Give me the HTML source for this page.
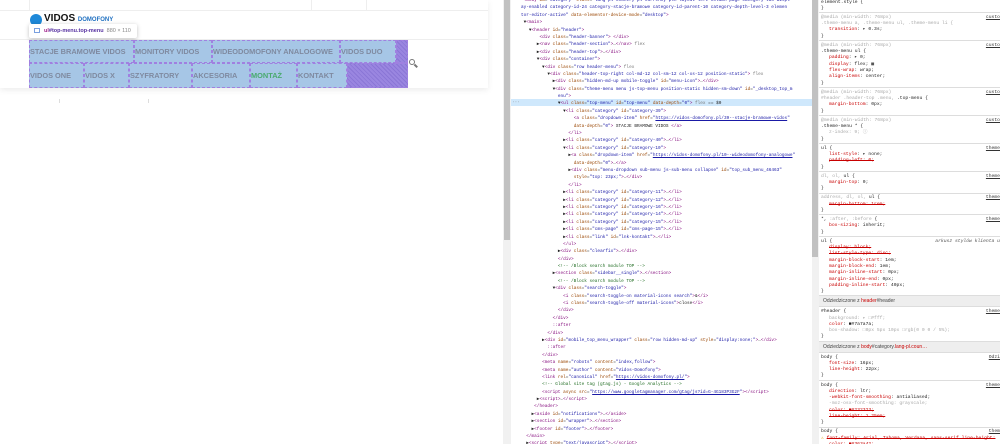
<!DOCTYPE html>
<html><head><meta charset="utf-8"><style>
*{margin:0;padding:0;box-sizing:border-box}
body{width:1000px;height:444px;overflow:hidden;background:#fff;position:relative;font-family:"Liberation Sans",sans-serif}
.abs{position:absolute}
.page{left:0;top:0;width:488px;height:88px;background:#fff;box-shadow:0 2px 6px rgba(0,0,0,.08)}
.cell{position:absolute;background:#a6c6e6;border:1px dashed #a080e0;color:#7f8aa0;font-size:7.4px;font-weight:bold;line-height:21px;padding-left:0;white-space:nowrap;overflow:hidden}
.hatch{position:absolute;background:repeating-linear-gradient(45deg,#9a86e0 0 2px,#8a76d6 2px 3px);border:1px dashed #a080e0}
.domclip{position:absolute;left:511px;top:0;width:301px;height:444px;overflow:hidden}
.dom{position:absolute;left:-19px;top:-3px;width:340px;font-family:"Liberation Mono",monospace;font-size:4.4px;line-height:7.4px;color:#222}
.dom div{height:7.4px;white-space:pre}
.t{color:#881280}.a{color:#994500}.v{color:#1a1aa6}.c{color:#236e25}.u{color:#1a1aa6;text-decoration:underline}.g{color:#777}
.sty{position:absolute;left:819px;top:-3px;width:181px;height:447px;font-family:"Liberation Mono",monospace;font-size:4.7px;line-height:6.3px;overflow:hidden;color:#222}
.b{padding:1.8px 0 0 2px;border-bottom:1px solid #ddd;position:relative;white-space:pre}
.p{padding-left:8px}.r{color:#c80000}.s{text-decoration:line-through;color:#c80000}.x{color:#aaa}
.src{position:absolute;right:0;top:1.8px;text-decoration:underline;color:#333}
.hd{background:#eee;font-family:"Liberation Sans",sans-serif;font-size:5px;line-height:10px;padding-left:4px;border-bottom:1px solid #ddd;color:#444;white-space:nowrap}
</style></head><body>
<div class="abs page">
 <div class="abs" style="left:0;top:10px;width:488px;height:1px;background:#eee"></div>
 <div class="abs" style="left:29px;top:0;width:1px;height:10px;background:#eee"></div>
 <div class="abs" style="left:311px;top:0;width:1px;height:10px;background:#eee"></div>
 <div class="abs" style="left:366px;top:0;width:1px;height:10px;background:#eee"></div>
 <div class="abs" style="left:0;top:39px;width:488px;height:1px;background:#eee"></div>
 <div class="abs" style="left:30px;top:14px;width:12px;height:12px;border-radius:50%;background:#1e88d8"></div>
 <div class="abs" style="left:44px;top:14px;font-size:10px;font-weight:bold;color:#111;line-height:10px">VIDOS <span style="font-size:6px;color:#1e6fc0">DOMOFONY</span></div>
 <div class="abs" style="left:29px;top:24px;width:108px;height:14px;background:#fff;box-shadow:0 1px 4px rgba(0,0,0,.25);border-radius:2px;font-size:5.5px;line-height:14px;padding-left:15px;white-space:nowrap"><span style="position:absolute;left:5px;top:4px;width:6px;height:5px;border:1px solid #7aa0e0"></span><b style="color:#a0208a">ul</b><b style="color:#5530a0">#top-menu.top-menu</b> <span style="color:#888">&nbsp;880 × 110</span></div>
 <div class="cell" style="left:29px;top:40px;width:105px;height:23px">STACJE BRAMOWE VIDOS</div>
 <div class="cell" style="left:134px;top:40px;width:78px;height:23px">MONITORY VIDOS</div>
 <div class="cell" style="left:212px;top:40px;width:128px;height:23px">WIDEODOMOFONY ANALOGOWE</div>
 <div class="cell" style="left:340px;top:40px;width:56px;height:23px">VIDOS DUO</div>
 <div class="hatch" style="left:396px;top:40px;width:12px;height:23px"></div>
 <div class="cell" style="left:29px;top:63px;width:55px;height:25px;line-height:23px">VIDOS ONE</div>
 <div class="cell" style="left:84px;top:63px;width:45px;height:25px;line-height:23px">VIDOS X</div>
 <div class="cell" style="left:129px;top:63px;width:63px;height:25px;line-height:23px">SZYFRATORY</div>
 <div class="cell" style="left:192px;top:63px;width:58px;height:25px;line-height:23px">AKCESORIA</div>
 <div class="cell" style="left:250px;top:63px;width:47px;height:25px;line-height:23px;color:#4aaa70">MONTAŻ</div>
 <div class="cell" style="left:297px;top:63px;width:50px;height:25px;line-height:23px">KONTAKT</div>
 <div class="hatch" style="left:347px;top:63px;width:61px;height:25px"></div>
 <div class="abs" style="left:409px;top:59px;width:6px;height:6px;border:1.3px solid #777;border-radius:50%"></div>
 <div class="abs" style="left:414px;top:65px;width:4px;height:1.5px;background:#777;transform:rotate(45deg)"></div>
</div>
<div class="abs" style="left:59px;top:99px;width:1px;height:4px;background:#ddd"></div>
<div class="abs" style="left:148px;top:99px;width:1px;height:4px;background:#ddd"></div>
<div class="abs" style="left:503px;top:0;width:8px;height:444px;background:#f1f1f1"></div>
<div class="abs" style="left:504px;top:0;width:6px;height:240px;background:#c1c1c1"></div>
<div class="abs" style="left:812px;top:0;width:7px;height:444px;background:#f1f1f1"></div>
<div class="abs" style="left:812px;top:0;width:6px;height:257px;background:#c1c1c1"></div>
<div class="abs" style="left:511px;top:99px;width:301px;height:7px;background:#cfe8fc"></div>
<div class="abs" style="left:512px;top:99px;font-family:'Liberation Mono',monospace;font-size:4.4px;line-height:7px;color:#777">···</div>
<div class="domclip"><div class="dom"><div>            <span class="t">&lt;body</span> <span class="a">id</span>=<span class="v">"category"</span> <span class="a">class</span>=<span class="v">"lang-pl country-pl currency-pln layout-left-column page-category tax-displ</span></div><div><span class="v">           ay-enabled category-id-24 category-stacje-bramowe category-id-parent-10 category-depth-level-3 elemen</span></div><div><span class="v">           tor-editor-active"</span> <span class="a">data-elementor-device-mode</span>=<span class="v">"desktop"</span><span class="t">&gt;</span></div><div>            ▼<span class="t">&lt;main&gt;</span></div><div>              ▼<span class="t">&lt;header</span> <span class="a">id</span>=<span class="v">"header"</span><span class="t">&gt;</span></div><div>                  <span class="t">&lt;div</span> <span class="a">class</span>=<span class="v">"header-banner"</span><span class="t">&gt; &lt;/div&gt;</span></div><div>                 ▶<span class="t">&lt;nav</span> <span class="a">class</span>=<span class="v">"header-section"</span><span class="t">&gt;</span>…<span class="t">&lt;/nav&gt;</span> <span class="g">flex</span></div><div>                 ▶<span class="t">&lt;div</span> <span class="a">class</span>=<span class="v">"header-top"</span><span class="t">&gt;</span>…<span class="t">&lt;/div&gt;</span></div><div>                 ▼<span class="t">&lt;div</span> <span class="a">class</span>=<span class="v">"container"</span><span class="t">&gt;</span></div><div>                   ▼<span class="t">&lt;div</span> <span class="a">class</span>=<span class="v">"row header-menu"</span><span class="t">&gt;</span> <span class="g">flex</span></div><div>                     ▼<span class="t">&lt;div</span> <span class="a">class</span>=<span class="v">"header-top-right col-md-12 col-sm-12 col-xs-12 position-static"</span><span class="t">&gt;</span> <span class="g">flex</span></div><div>                       ▶<span class="t">&lt;div</span> <span class="a">class</span>=<span class="v">"hidden-md-up mobile-toggle"</span> <span class="a">id</span>=<span class="v">"menu-icon"</span><span class="t">&gt;</span>…<span class="t">&lt;/div&gt;</span></div><div>                       ▼<span class="t">&lt;div</span> <span class="a">class</span>=<span class="v">"theme-menu menu js-top-menu position-static hidden-sm-down"</span> <span class="a">id</span>=<span class="v">"_desktop_top_m</span></div><div><span class="v">                         enu"</span><span class="t">&gt;</span></div><div>                         ▼<span class="t">&lt;ul</span> <span class="a">class</span>=<span class="v">"top-menu"</span> <span class="a">id</span>=<span class="v">"top-menu"</span> <span class="a">data-depth</span>=<span class="v">"0"</span><span class="t">&gt;</span> <span class="g">flex</span> == $0</div><div>                           ▼<span class="t">&lt;li</span> <span class="a">class</span>=<span class="v">"category"</span> <span class="a">id</span>=<span class="v">"category-39"</span><span class="t">&gt;</span></div><div>                               <span class="t">&lt;a</span> <span class="a">class</span>=<span class="v">"dropdown-item"</span> <span class="a">href</span>=<span class="v">"</span><span class="u">https://vidos-domofony.pl/39--stacje-bramowe-vidos</span><span class="v">"</span></div><div>                               <span class="a">data-depth</span>=<span class="v">"0"</span><span class="t">&gt;</span> STACJE BRAMOWE VIDOS <span class="t">&lt;/a&gt;</span></div><div>                             <span class="t">&lt;/li&gt;</span></div><div>                           ▶<span class="t">&lt;li</span> <span class="a">class</span>=<span class="v">"category"</span> <span class="a">id</span>=<span class="v">"category-40"</span><span class="t">&gt;</span>…<span class="t">&lt;/li&gt;</span></div><div>                           ▼<span class="t">&lt;li</span> <span class="a">class</span>=<span class="v">"category"</span> <span class="a">id</span>=<span class="v">"category-10"</span><span class="t">&gt;</span></div><div>                             ▶<span class="t">&lt;a</span> <span class="a">class</span>=<span class="v">"dropdown-item"</span> <span class="a">href</span>=<span class="v">"</span><span class="u">https://vidos-domofony.pl/10--wideodomofony-analogowe</span><span class="v">"</span></div><div>                               <span class="a">data-depth</span>=<span class="v">"0"</span><span class="t">&gt;</span>…<span class="t">&lt;/a&gt;</span></div><div>                             ▶<span class="t">&lt;div</span> <span class="a">class</span>=<span class="v">"menu-dropdown sub-menu js-sub-menu collapse"</span> <span class="a">id</span>=<span class="v">"top_sub_menu_46463"</span></div><div>                               <span class="a">style</span>=<span class="v">"top: 23px;"</span><span class="t">&gt;</span>…<span class="t">&lt;/div&gt;</span></div><div>                             <span class="t">&lt;/li&gt;</span></div><div>                           ▶<span class="t">&lt;li</span> <span class="a">class</span>=<span class="v">"category"</span> <span class="a">id</span>=<span class="v">"category-11"</span><span class="t">&gt;</span>…<span class="t">&lt;/li&gt;</span></div><div>                           ▶<span class="t">&lt;li</span> <span class="a">class</span>=<span class="v">"category"</span> <span class="a">id</span>=<span class="v">"category-12"</span><span class="t">&gt;</span>…<span class="t">&lt;/li&gt;</span></div><div>                           ▶<span class="t">&lt;li</span> <span class="a">class</span>=<span class="v">"category"</span> <span class="a">id</span>=<span class="v">"category-16"</span><span class="t">&gt;</span>…<span class="t">&lt;/li&gt;</span></div><div>                           ▶<span class="t">&lt;li</span> <span class="a">class</span>=<span class="v">"category"</span> <span class="a">id</span>=<span class="v">"category-14"</span><span class="t">&gt;</span>…<span class="t">&lt;/li&gt;</span></div><div>                           ▶<span class="t">&lt;li</span> <span class="a">class</span>=<span class="v">"category"</span> <span class="a">id</span>=<span class="v">"category-15"</span><span class="t">&gt;</span>…<span class="t">&lt;/li&gt;</span></div><div>                           ▶<span class="t">&lt;li</span> <span class="a">class</span>=<span class="v">"cms-page"</span> <span class="a">id</span>=<span class="v">"cms-page-15"</span><span class="t">&gt;</span>…<span class="t">&lt;/li&gt;</span></div><div>                           ▶<span class="t">&lt;li</span> <span class="a">class</span>=<span class="v">"link"</span> <span class="a">id</span>=<span class="v">"lnk-kontakt"</span><span class="t">&gt;</span>…<span class="t">&lt;/li&gt;</span></div><div>                           <span class="t">&lt;/ul&gt;</span></div><div>                         ▶<span class="t">&lt;div</span> <span class="a">class</span>=<span class="v">"clearfix"</span><span class="t">&gt;</span>…<span class="t">&lt;/div&gt;</span></div><div>                         <span class="t">&lt;/div&gt;</span></div><div>                         <span class="c">&lt;!-- /Block search module TOP --&gt;</span></div><div>                       ▶<span class="t">&lt;section</span> <span class="a">class</span>=<span class="v">"sidebar__single"</span><span class="t">&gt;</span>…<span class="t">&lt;/section&gt;</span></div><div>                         <span class="c">&lt;!-- /Block search module TOP --&gt;</span></div><div>                       ▼<span class="t">&lt;div</span> <span class="a">class</span>=<span class="v">"search-toggle"</span><span class="t">&gt;</span></div><div>                           <span class="t">&lt;i</span> <span class="a">class</span>=<span class="v">"search-toggle-on material-icons search"</span><span class="t">&gt;</span>&amp;<span class="t">&lt;/i&gt;</span></div><div>                           <span class="t">&lt;i</span> <span class="a">class</span>=<span class="v">"search-toggle-off material-icons"</span><span class="t">&gt;</span>close<span class="t">&lt;/i&gt;</span></div><div>                         <span class="t">&lt;/div&gt;</span></div><div>                       <span class="t">&lt;/div&gt;</span></div><div>                       <span class="t">::after</span></div><div>                     <span class="t">&lt;/div&gt;</span></div><div>                   ▶<span class="t">&lt;div</span> <span class="a">id</span>=<span class="v">"mobile_top_menu_wrapper"</span> <span class="a">class</span>=<span class="v">"row hidden-md-up"</span> <span class="a">style</span>=<span class="v">"display:none;"</span><span class="t">&gt;</span>…<span class="t">&lt;/div&gt;</span></div><div>                     <span class="t">::after</span></div><div>                   <span class="t">&lt;/div&gt;</span></div><div>                   <span class="t">&lt;meta</span> <span class="a">name</span>=<span class="v">"robots"</span> <span class="a">content</span>=<span class="v">"index,follow"</span><span class="t">&gt;</span></div><div>                   <span class="t">&lt;meta</span> <span class="a">name</span>=<span class="v">"author"</span> <span class="a">content</span>=<span class="v">"Vidos-Domofony"</span><span class="t">&gt;</span></div><div>                   <span class="t">&lt;link</span> <span class="a">rel</span>=<span class="v">"canonical"</span> <span class="a">href</span>=<span class="v">"</span><span class="u">https://vidos-domofony.pl/</span><span class="v">"</span><span class="t">&gt;</span></div><div>                   <span class="c">&lt;!-- Global site tag (gtag.js) - Google Analytics --&gt;</span></div><div>                   <span class="t">&lt;script</span> <span class="a">async src</span>=<span class="v">"</span><span class="u">https://www.googletagmanager.com/gtag/js?id=G-4G183P3G2F</span><span class="v">"</span><span class="t">&gt;&lt;/script&gt;</span></div><div>                 ▶<span class="t">&lt;script&gt;</span>…<span class="t">&lt;/script&gt;</span></div><div>                <span class="t">&lt;/header&gt;</span></div><div>               ▶<span class="t">&lt;aside</span> <span class="a">id</span>=<span class="v">"notifications"</span><span class="t">&gt;</span>…<span class="t">&lt;/aside&gt;</span></div><div>               ▶<span class="t">&lt;section</span> <span class="a">id</span>=<span class="v">"wrapper"</span><span class="t">&gt;</span>…<span class="t">&lt;/section&gt;</span></div><div>               ▶<span class="t">&lt;footer</span> <span class="a">id</span>=<span class="v">"footer"</span><span class="t">&gt;</span>…<span class="t">&lt;/footer&gt;</span></div><div>             <span class="t">&lt;/main&gt;</span></div><div>             ▶<span class="t">&lt;script</span> <span class="a">type</span>=<span class="v">"text/javascript"</span><span class="t">&gt;</span>…<span class="t">&lt;/script&gt;</span></div></div></div>
<div class="sty"><div class="b" style="padding-top:2.5px">element.style {
}</div><div class="b"><span class="x">@media (min-width: 768px)</span>
<span class="x">.theme-menu a, .theme-menu ul, .theme-menu li {</span>
<span class="p"><span class="r">transition</span>: ▸ 0.3s;</span>
}<span class="src">custo</span></div><div class="b"><span class="x">@media (min-width: 768px)</span>
.theme-menu ul {
<span class="p"><span class="r">padding</span>: ▸ 0;</span>
<span class="p"><span class="r">display</span>: flex; ▦</span>
<span class="p"><span class="r">flex-wrap</span>: wrap;</span>
<span class="p"><span class="r">align-items</span>: center;</span>
}<span class="src">custo</span></div><div class="b"><span class="x">@media (min-width: 768px)</span>
<span class="x">#header .header-top .menu, </span>.top-menu {
<span class="p"><span class="r">margin-bottom</span>: 0px;</span>
}<span class="src">custo</span></div><div class="b"><span class="x">@media (min-width: 768px)</span>
.theme-menu * {
<span class="p"><span class="x">z-index: 9; ⓘ</span></span>
}<span class="src">custo</span></div><div class="b">ul {
<span class="p"><span class="r">list-style</span>: ▸ none;</span>
<span class="p"><span class="s">padding-left: 0;</span></span>
}<span class="src">theme</span></div><div class="b"><span class="x">dl, ol, </span>ul {
<span class="p"><span class="r">margin-top</span>: 0;</span>
}<span class="src">theme</span></div><div class="b"><span class="x">address, dl, ol, </span>ul {
<span class="p"><span class="s">margin-bottom: 1rem;</span></span>
}<span class="src">theme</span></div><div class="b">*, <span class="x">:after, :before</span> {
<span class="p"><span class="r">box-sizing</span>: inherit;</span>
}<span class="src">theme</span></div><div class="b">ul {<span class="src" style="text-decoration:none;font-style:italic;color:#555">arkusz stylów klienta u</span>
<span class="p"><span class="s">display: block;</span></span>
<span class="p"><span class="s">list-style-type: disc;</span></span>
<span class="p"><span class="r">margin-block-start</span>: 1em;</span>
<span class="p"><span class="r">margin-block-end</span>: 1em;</span>
<span class="p"><span class="r">margin-inline-start</span>: 0px;</span>
<span class="p"><span class="r">margin-inline-end</span>: 0px;</span>
<span class="p"><span class="r">padding-inline-start</span>: 40px;</span>
}</div><div class="hd">Odziedziczone z <span style="color:#c80000">header</span>#header</div><div class="b">#header {
<span class="p"><span class="x">background: ▸ □#fff;</span></span>
<span class="p"><span class="r">color</span>: ■#7a7a7a;</span>
<span class="p"><span class="x">box-shadow: □0px 5px 10px □rgb(0 0 0 / 5%);</span></span>
}<span class="src">theme</span></div><div class="hd">Odziedziczone z <span style="color:#c80000">body</span>#category.<span style="color:#c80000">lang-pl.coun…</span></div><div class="b">body {
<span class="p"><span class="r">font-size</span>: 16px;</span>
<span class="p"><span class="r">line-height</span>: 22px;</span>
}<span class="src">Odzi</span></div><div class="b">body {
<span class="p"><span class="r">direction</span>: ltr;</span>
<span class="p"><span class="r">-webkit-font-smoothing</span>: antialiased;</span>
<span class="p"><span class="x">-moz-osx-font-smoothing: grayscale;</span></span>
<span class="p"><span class="s">color: ■#232323;</span></span>
<span class="p"><span class="s">line-height: 1.25em;</span></span>
}<span class="src">theme</span></div><div class="b">body {
<span style="color:#e0a000">⚠</span> <span class="s">font-family: Arial, Tahoma, Verdana, sans-serif line-height:</span>
<span class="p"><span class="s">color: ■#363a42;</span></span>
}<span class="src">them</span></div></div>
</body></html>
